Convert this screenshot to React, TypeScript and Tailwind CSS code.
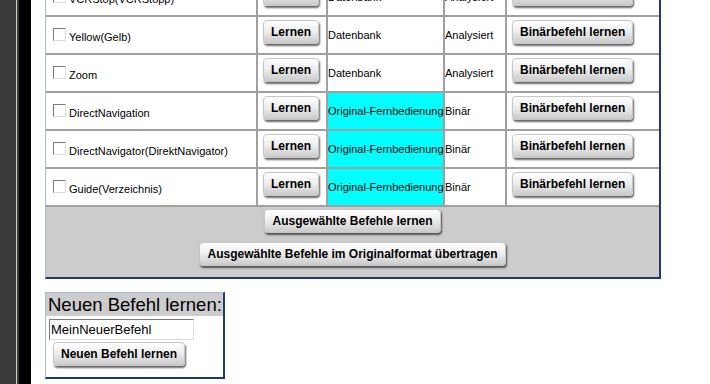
import React from 'react';

type Row = { name: string; source: string; type: string; original: boolean };

const rows: Row[] = [
  { name: 'VCRStop(VCRStopp)', source: 'Datenbank', type: 'Analysiert', original: false },
  { name: 'Yellow(Gelb)', source: 'Datenbank', type: 'Analysiert', original: false },
  { name: 'Zoom', source: 'Datenbank', type: 'Analysiert', original: false },
  { name: 'DirectNavigation', source: 'Original-Fernbedienung', type: 'Binär', original: true },
  { name: 'DirectNavigator(DirektNavigator)', source: 'Original-Fernbedienung', type: 'Binär', original: true },
  { name: 'Guide(Verzeichnis)', source: 'Original-Fernbedienung', type: 'Binär', original: true },
];

const Btn: React.FC<{ children: React.ReactNode }> = ({ children }) => (
  <button
    type="button"
    className="h-[24px] px-[7px] rounded-[4px] border border-[#c6c6c6] bg-linear-to-b from-white via-[#ececec] to-[#cacaca] shadow-[1px_2px_2px_rgba(0,0,0,0.6)] text-[12px] font-bold text-black leading-none whitespace-nowrap font-['Liberation_Sans',Arial,sans-serif]"
  >
    {children}
  </button>
);

const Checkbox: React.FC = () => (
  <div className="w-[13px] h-[13px] shrink-0 bg-white border border-t-[#7c7c7c] border-l-[#7c7c7c] border-r-[#dcdcdc] border-b-[#dcdcdc]" />
);

export default function App() {
  return (
    <div className="flex h-[384px] bg-white overflow-hidden font-['Liberation_Sans',Arial,sans-serif] text-black">
      {/* window frame on the left */}
      <div className="w-[16px] bg-[#3a3a3a]" />
      <div className="w-px bg-[#d2cec2]" />
      <div className="w-[2px] bg-[#3a3a3a]" />
      <div className="w-[12px] bg-black" />

      <div className="flex-1 pl-[14px] -mt-[21px]">
        {/* Befehle table (scrolled, first row partly hidden) */}
        <div className="w-[616px] border-l border-l-[#a9bbdc] border-r-2 border-r-[#1e3a78] border-b-2 border-b-[#1e3a78]">
          {rows.map((row) => (
            <div key={row.name} className="grid grid-cols-[212px_70px_117px_62px_152px]">
              <div className="h-[38px] border-r-2 border-b-2 border-[#a0a0a0] pl-[7px] pt-[11px]">
                <div className="flex items-baseline gap-[3px]">
                  <Checkbox />
                  <span className="text-[11px] leading-none whitespace-nowrap">{row.name}</span>
                </div>
              </div>
              <div className="h-[38px] border-r-2 border-b-2 border-[#a0a0a0] pl-[5px] pt-[2px]">
                <Btn>Lernen</Btn>
              </div>
              <div
                className={
                  row.original
                    ? 'h-[38px] border-r-2 border-b-2 border-[#a0a0a0] bg-[#00ffff] flex items-center text-[11px] whitespace-nowrap'
                    : 'h-[38px] border-r-2 border-b-2 border-[#a0a0a0] flex items-center text-[11px] whitespace-nowrap'
                }
              >
                {row.source}
              </div>
              <div className="h-[38px] border-r-2 border-b-2 border-[#a0a0a0] flex items-center text-[11px] whitespace-nowrap">
                {row.type}
              </div>
              <div className="h-[38px] border-b-2 border-[#a0a0a0] pl-[5px] pt-[2px]">
                <Btn>Binärbefehl lernen</Btn>
              </div>
            </div>
          ))}

          <div className="h-[70px] bg-[#cccccc] flex flex-col items-center pt-[2px] gap-[9px]">
            <Btn>Ausgewählte Befehle lernen</Btn>
            <Btn>Ausgewählte Befehle im Originalformat übertragen</Btn>
          </div>
        </div>

        {/* Neuen Befehl */}
        <div className="mt-[13px] w-[180px] border-l border-t border-l-[#a9bbdc] border-t-[#a9bbdc] border-r-2 border-b-2 border-r-[#1e3a78] border-b-[#1e3a78] pb-[11px]">
          <div className="h-[23px] bg-[#cccccc] pl-[2px] text-[18.5px] leading-[23px] whitespace-nowrap">
            Neuen Befehl lernen:
          </div>
          <input
            type="text"
            defaultValue="MeinNeuerBefehl"
            className="block mt-[3px] ml-[3px] w-[145px] h-[21px] px-px text-[13px] leading-none bg-white border border-t-[#7c7c7c] border-l-[#7c7c7c] border-r-[#dcdcdc] border-b-[#dcdcdc] outline-none"
          />
          <div className="ml-[7px] mt-px">
            <Btn>Neuen Befehl lernen</Btn>
          </div>
        </div>
      </div>
    </div>
  );
}
